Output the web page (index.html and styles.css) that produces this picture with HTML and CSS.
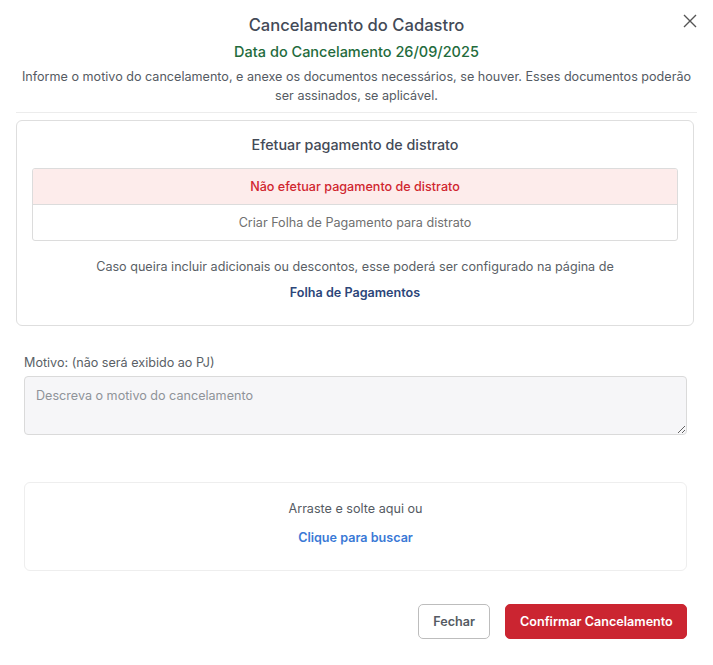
FILE: index.html
```html
<!doctype html>
<html lang="pt-BR">
    <head>
        <meta charset="utf-8">
        <title>Cancelamento do Cadastro</title>
        <link rel="stylesheet" href="styles.css">
    </head>
    <body>
        <div class="modal">
            <div class="modal__header">
                <h2 class="modal__title">Cancelamento do Cadastro</h2>
                <button class="modal__close" aria-label="Fechar">
                    <svg width="14" height="14" viewBox="0 0 14 14"><path d="M1 1L13 13M13 1L1 13" stroke="#555" stroke-width="1.4" fill="none"/></svg>
                </button>
                <div class="modal__date">Data do Cancelamento 26/09/2025</div>
                <p class="modal__info">Informe o motivo do cancelamento, e anexe os documentos necessários, se houver. Esses documentos poderão ser assinados, se aplicável.</p>
            </div>

            <div class="card">
                <div class="card__title">Efetuar pagamento de distrato</div>
                <div class="options">
                    <div class="options__item options__item--active">Não efetuar pagamento de distrato</div>
                    <div class="options__item">Criar Folha de Pagamento para distrato</div>
                </div>
                <p class="card__text">Caso queira incluir adicionais ou descontos, esse poderá ser configurado na página de</p>
                <a class="card__link" href="#">Folha de Pagamentos</a>
            </div>

            <div class="field">
                <label class="field__label" for="motivo">Motivo: (não será exibido ao PJ)</label>
                <textarea class="field__input" id="motivo" placeholder="Descreva o motivo do cancelamento"></textarea>
            </div>

            <div class="dropzone">
                <div class="dropzone__text">Arraste e solte aqui ou</div>
                <a class="dropzone__link" href="#">Clique para buscar</a>
            </div>

            <div class="modal__footer">
                <button class="btn btn--outline">Fechar</button>
                <button class="btn btn--danger">Confirmar Cancelamento</button>
            </div>
        </div>
    </body>
</html>
```

FILE: styles.css
```css
* {
    box-sizing: border-box;
}

body {
    background: #fff;
    margin: 0;
    font-family: Inter, "Noto Sans", sans-serif;
}

.modal {
    padding: 0 16px 0 16px;
    width: 713px;
}

.modal__header {
    border-bottom: 1px solid #ececec;
    padding: 13px 0 7px;
    position: relative;
    text-align: center;
}

.modal__title {
    color: #434a57;
    font-size: 16.6px;
    font-weight: 500;
    line-height: 24px;
    margin: 0;
}

.modal__close {
    background: none;
    border: 0;
    cursor: pointer;
    padding: 0;
    position: absolute;
    right: 0;
    top: 14px;
}

.modal__date {
    color: #236b3c;
    font-size: 14.5px;
    font-weight: 500;
    line-height: 20px;
    margin-top: 5px;
}

.modal__info {
    color: #555b63;
    font-size: 12.6px;
    line-height: 19px;
    margin: 5px 0 0;
}

.card {
    border: 1px solid #dedede;
    border-radius: 6px;
    margin: 7px 3px 0 0;
    padding: 14px 15px 23px;
    text-align: center;
}

.card__title {
    color: #434a57;
    font-size: 14.3px;
    font-weight: 500;
    line-height: 20px;
}

.options {
    border: 1px solid #dcdcdc;
    border-radius: 3px;
    margin-top: 13px;
    overflow: hidden;
}

.options__item {
    color: #707070;
    font-size: 12.6px;
    line-height: 35px;
}

.options__item--active {
    background: #fdeceb;
    border-bottom: 1px solid #dcdcdc;
    color: #d0262f;
    font-weight: 500;
}

.card__text {
    color: #5a5f66;
    font-size: 12.6px;
    line-height: 18px;
    margin: 17px 0 0;
}

.card__link {
    color: #2c4679;
    display: block;
    font-size: 12.6px;
    font-weight: 600;
    line-height: 18px;
    margin-top: 8px;
    text-decoration: none;
}

.field {
    margin: 28px 10px 0 8px;
}

.field__label {
    color: #5a5f66;
    display: block;
    font-size: 12.6px;
    line-height: 18px;
}

.field__input {
    background: #f6f6f8;
    border: 1px solid #dadada;
    border-radius: 4px;
    color: #555;
    display: block;
    font-family: inherit;
    font-size: 12.6px;
    height: 59px;
    margin-top: 4px;
    padding: 11px 11px;
    resize: vertical;
    width: 100%;
}

.field__input::placeholder {
    color: #8f9399;
}

.dropzone {
    border: 1px solid #eeeeee;
    border-radius: 6px;
    margin: 47px 10px 0 8px;
    padding: 17px 0 23px;
    text-align: center;
}

.dropzone__text {
    color: #555b63;
    font-size: 12.6px;
    line-height: 18px;
}

.dropzone__link {
    color: #3a79d6;
    display: block;
    font-size: 12.6px;
    font-weight: 600;
    line-height: 18px;
    margin-top: 11px;
    text-decoration: none;
}

.modal__footer {
    display: flex;
    gap: 15px;
    justify-content: flex-end;
    margin: 33px 10px 0 0;
}

.btn {
    border-radius: 5px;
    cursor: pointer;
    font-family: inherit;
    font-size: 12.6px;
    font-weight: 600;
    height: 35px;
    padding: 0 14px;
    white-space: nowrap;
}

.btn--outline {
    background: #fff;
    border: 1px solid #bdbdbd;
    color: #555b63;
}

.btn--danger {
    background: #cb2531;
    border: 1px solid #cb2531;
    color: #fff;
    width: 182px;
}
```
